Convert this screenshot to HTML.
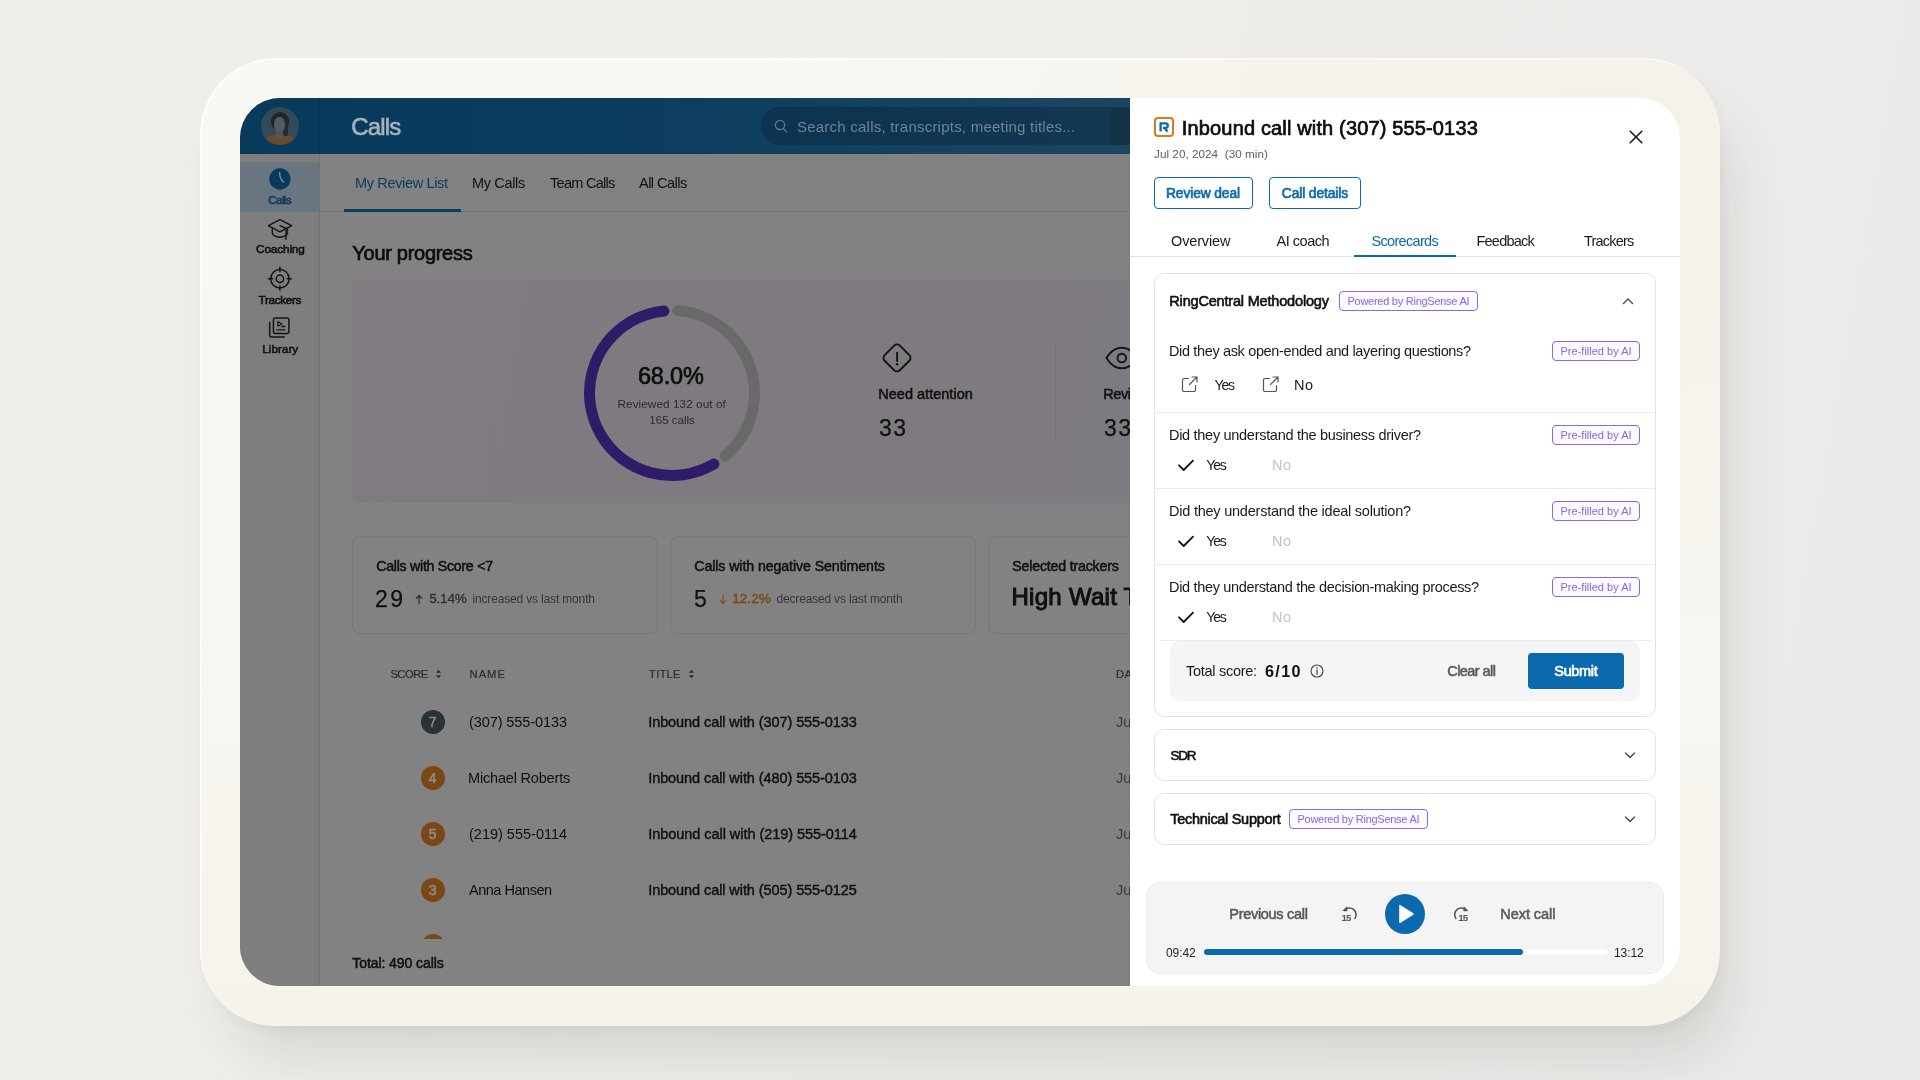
<!DOCTYPE html><html><head><meta charset="utf-8"><title>Calls</title><style>html,body{margin:0;padding:0}body{width:1920px;height:1080px;overflow:hidden;position:relative;font-family:"Liberation Sans", sans-serif;background:linear-gradient(100deg,#efeeeb 0%,#eeedea 50%,#ebeae8 100%)}.a{position:absolute}.t{position:absolute;white-space:nowrap;line-height:1;margin:0}svg{position:absolute;overflow:visible}</style></head><body>
<div class="a" style="left:200px;top:58px;width:1520px;height:968px;background:radial-gradient(ellipse 55% 60% at 92% 8%,#f4f1e8 0%,#f6f3ec 40%,rgba(248,246,241,0) 100%),linear-gradient(180deg,#f9f8f4 0%,#f8f6f1 60%,#f6f3eb 100%);border-radius:76px;box-shadow:20px 45px 55px -12px rgba(60,55,45,.125),4px 8px 14px -4px rgba(60,55,45,.05),inset 1.5px 1.5px 1px rgba(255,255,255,.8);"></div>
<div class="a" style="left:240px;top:98px;width:1440px;height:888px;border-radius:40px;overflow:hidden;will-change:transform">
<div class="a" style="left:-240px;top:-98px;width:1920px;height:1080px">
<div class="a" style="left:240px;top:98px;width:894px;height:888px;background:#828282;"></div>
<div class="a" style="left:240px;top:98px;width:894px;height:56px;background:linear-gradient(90deg,#083a5b 0%,#0a3c5e 40%,#1b4662 100%);"></div>
<div class="a" style="left:240px;top:154px;width:80px;height:832px;background:#7e7e7e;"></div>
<div class="a" style="left:319px;top:98px;width:1px;height:888px;background:rgba(0,0,0,.09);"></div>
<div class="a" style="left:240px;top:162px;width:79px;height:50px;background:#69757f;"></div>
<div class="a" style="left:261px;top:107px;width:38px;height:38px;border-radius:50%;overflow:hidden;background:#34495a"><div class="a" style="left:4px;top:27px;width:30px;height:14px;border-radius:50% 50% 0 0;background:#6a4a2a"></div><div class="a" style="left:10px;top:5px;width:18px;height:18px;border-radius:50% 50% 40% 40%;background:#1f2428"></div><div class="a" style="left:22px;top:11px;width:5px;height:18px;border-radius:3px;background:#262b30"></div><div class="a" style="left:13px;top:10px;width:11px;height:16px;border-radius:45% 45% 50% 50%;background:#555a60"></div><div class="a" style="left:15px;top:24px;width:7px;height:8px;background:#50555b"></div></div>
<div class="t" id="t0" style="top:114.68px;font-size:24px;color:#a7b3bc;-webkit-text-stroke:0.60px;letter-spacing:-0.861px;left:351.30px;">Calls</div>
<div class="a" style="left:761px;top:107px;width:373px;height:38px;background:rgba(6,28,48,.33);border-radius:19px 0 0 19px;"></div>
<svg style="left:773px;top:118px;" width="16" height="16" viewBox="0 0 16 16" fill="none"><circle cx="7" cy="7" r="4.6" stroke="#5c7a90" stroke-width="1.3"/><path d="M10.4 10.6 13.6 13.8" stroke="#5c7a90" stroke-width="1.3" stroke-linecap="round"/></svg>
<div class="t" id="t1" style="top:118.80px;font-size:15px;color:#6c8596;letter-spacing:0.226px;left:797.00px;">Search calls, transcripts, meeting titles...</div>
<div class="a" style="left:1111px;top:107px;width:23px;height:38px;background:rgba(20,30,40,.25);"></div>
<svg style="left:268px;top:167px;" width="24" height="24" viewBox="0 0 24 24" fill="none"><circle cx="11.900" cy="12" r="10.700" fill="#0a3a5b"/><path d="M11.600 5.600c-.100 4.200.800 6.800 4 9.500" stroke="#8493a0" stroke-width="1.300" stroke-linecap="round"/></svg>
<div class="t" id="t2" style="top:194.51px;font-size:11.8px;color:#0a3a5b;-webkit-text-stroke:0.55px;letter-spacing:-0.671px;left:268.17px;">Calls</div>
<svg style="left:268px;top:218px;" width="24" height="23" viewBox="0 0 24 23" fill="none"><path d="M11.900 1.700.400 7.700l11.500 6.100 11.800-6.100Z" stroke="#141414" stroke-width="1.400" stroke-linejoin="round"/><path d="M4.300 10.200v4.800c0 2.300 3.400 4.200 7.600 4.200s7.600-1.900 7.600-4.200v-4.800" stroke="#141414" stroke-width="1.400"/><path d="M11.900 7.700 18 10.500v11" stroke="#141414" stroke-width="1.400" stroke-linecap="round" stroke-linejoin="round"/></svg>
<div class="t" id="t3" style="top:244.31px;font-size:11.8px;color:#101010;-webkit-text-stroke:0.55px;letter-spacing:-0.162px;left:256.12px;">Coaching</div>
<svg style="left:268px;top:267px;" width="24" height="24" viewBox="0 0 24 24" fill="none"><circle cx="11.900" cy="11.800" r="9.200" stroke="#141414" stroke-width="1.500"/><circle cx="11.900" cy="11.800" r="3.700" stroke="#141414" stroke-width="1.500"/><path d="M11.900.300v4.200M11.900 19.100v4.200M.400 11.800h4.200M19.200 11.800h4.200" stroke="#141414" stroke-width="1.500" stroke-linecap="round"/></svg>
<div class="t" id="t4" style="top:294.51px;font-size:11.8px;color:#101010;-webkit-text-stroke:0.55px;letter-spacing:-0.372px;left:258.62px;">Trackers</div>
<svg style="left:268px;top:317px;" width="24" height="22" viewBox="0 0 24 22" fill="none"><rect x="5.400" y="1.100" width="15.500" height="15.500" rx="2" stroke="#141414" stroke-width="1.500"/><path d="M1.700 5.500v13.200a1.200 1.200 0 0 0 1.200 1.200h13.400" stroke="#141414" stroke-width="1.500" stroke-linecap="round"/><path d="M9.800 4.600v4.600l4.100-2.300Z" stroke="#141414" stroke-width="1.100" stroke-linejoin="round"/><path d="M14 9.500h2.700M8.900 12.900h7.800" stroke="#141414" stroke-width="1.400" stroke-linecap="round"/></svg>
<div class="t" id="t5" style="top:344.31px;font-size:11.8px;color:#101010;-webkit-text-stroke:0.55px;letter-spacing:-0.019px;left:262.27px;">Library</div>
<div class="a" style="left:320px;top:211px;width:814px;height:1px;background:#757575;"></div>
<div class="a" style="left:344px;top:209px;width:117px;height:3px;background:#0b3e63;"></div>
<div class="t" id="t6" style="top:175.73px;font-size:14.5px;color:#0b3e63;letter-spacing:-0.344px;left:355.00px;">My Review List</div>
<div class="t" id="t7" style="top:175.73px;font-size:14.5px;color:#101010;letter-spacing:-0.335px;left:472.00px;">My Calls</div>
<div class="t" id="t8" style="top:175.73px;font-size:14.5px;color:#101010;letter-spacing:-0.719px;left:550.00px;">Team Calls</div>
<div class="t" id="t9" style="top:175.73px;font-size:14.5px;color:#101010;letter-spacing:-0.516px;left:639.00px;">All Calls</div>
<div class="t" id="t10" style="top:242.57px;font-size:20px;color:#0c0c0c;-webkit-text-stroke:0.70px;letter-spacing:-0.290px;left:352.35px;">Your progress</div>
<div class="a" style="left:352px;top:280px;width:782px;height:223px;background:linear-gradient(100deg,#807b80 0%,#7f7a7f 50%,#7e7a81 100%);border-radius:6px;"></div>
<svg style="left:572px;top:293px;" width="200" height="200" viewBox="0 0 200 200" fill="none"><circle cx="100" cy="100" r="82.5" stroke="#696969" stroke-width="11" stroke-linecap="round" stroke-dasharray="195.5 1000" transform="rotate(-86 100 100)"/><circle cx="100" cy="100" r="82.5" stroke="#2f1b67" stroke-width="11" stroke-linecap="round" stroke-dasharray="294.5 1000" transform="rotate(59.5 100 100)"/></svg>
<div class="t" id="t11" style="top:364.81px;font-size:23.5px;color:#0c0c0c;-webkit-text-stroke:0.65px;letter-spacing:-0.174px;left:637.98px;">68.0%</div>
<div class="t" id="t12" style="top:398.71px;font-size:11.8px;color:#2b2b2b;letter-spacing:0.040px;left:617.50px;">Reviewed 132 out of</div>
<div class="t" id="t13" style="top:414.61px;font-size:11.8px;color:#2b2b2b;letter-spacing:-0.121px;left:649.35px;">165 calls</div>
<svg style="left:881px;top:343px;" width="32" height="30" viewBox="0 0 32 30" fill="none"><rect x="5.300" y="4.200" width="21.400" height="21.400" rx="4" transform="rotate(45 16 14.900)" stroke="#141414" stroke-width="1.900"/><path d="M16.100 9.800v8.200" stroke="#141414" stroke-width="1.900" stroke-linecap="round"/><circle cx="16.100" cy="21.300" r="1.200" fill="#141414"/></svg>
<div class="t" id="t14" style="top:386.53px;font-size:14.5px;color:#101010;-webkit-text-stroke:0.50px;letter-spacing:0.018px;left:878.25px;">Need attention</div>
<div class="t" id="t15" style="top:417.03px;font-size:23px;color:#101010;-webkit-text-stroke:0.25px;letter-spacing:1.448px;left:879.12px;">33</div>
<div class="a" style="left:1055px;top:342px;width:1px;height:100px;background:#777277;"></div>
<svg style="left:1104px;top:345px;" width="36" height="26" viewBox="0 0 36 26" fill="none"><path d="M2.500 13C7 5.500 12 2.700 17.800 2.700S28.600 5.500 33.100 13C28.600 20.500 23.600 23.300 17.800 23.300S7 20.500 2.500 13Z" stroke="#141414" stroke-width="1.900" stroke-linejoin="round"/><circle cx="17.800" cy="13" r="4.300" stroke="#141414" stroke-width="1.900"/></svg>
<div class="t" id="t16" style="top:386.53px;font-size:14.5px;color:#101010;-webkit-text-stroke:0.50px;letter-spacing:-0.444px;left:1103.25px;">Reviewed</div>
<div class="t" id="t17" style="top:417.03px;font-size:23px;color:#101010;-webkit-text-stroke:0.25px;letter-spacing:1.448px;left:1104.12px;">33</div>
<div class="a" style="left:352px;top:536px;width:306px;height:98px;border-radius:8px;border:1px solid #787878;box-sizing:border-box;"></div>
<div class="a" style="left:670px;top:536px;width:306px;height:98px;border-radius:8px;border:1px solid #787878;box-sizing:border-box;"></div>
<div class="a" style="left:988px;top:536px;width:306px;height:98px;border-radius:8px;border:1px solid #787878;box-sizing:border-box;"></div>
<div class="t" id="t18" style="top:559.08px;font-size:14.2px;color:#101010;-webkit-text-stroke:0.50px;letter-spacing:-0.280px;left:376.25px;">Calls with Score &lt;7</div>
<div class="t" id="t19" style="top:587.83px;font-size:23px;color:#101010;-webkit-text-stroke:0.25px;letter-spacing:2.448px;left:375.12px;">29</div>
<svg style="left:415px;top:594px;" width="8" height="11" viewBox="0 0 8 11" fill="none"><path d="M4 10V1.500M1.200 4.300 4 1.500l2.800 2.800" stroke="#2f2f2f" stroke-width="1.200" stroke-linecap="round" stroke-linejoin="round"/></svg>
<div class="t" id="t20" style="top:592.07px;font-size:13.5px;color:#2f2f2f;-webkit-text-stroke:0.35px;letter-spacing:-0.157px;left:429.18px;">5.14%</div>
<div class="t" id="t21" style="top:593.34px;font-size:12px;color:#363636;letter-spacing:-0.163px;left:472.50px;">increased vs last month</div>
<div class="t" id="t22" style="top:559.08px;font-size:14.2px;color:#101010;-webkit-text-stroke:0.50px;letter-spacing:-0.090px;left:694.25px;">Calls with negative Sentiments</div>
<div class="t" id="t23" style="top:587.83px;font-size:23px;color:#101010;-webkit-text-stroke:0.25px;left:694.12px;">5</div>
<svg style="left:719px;top:594px;" width="8" height="11" viewBox="0 0 8 11" fill="none"><path d="M4 1v8.500M1.200 6.700 4 9.500l2.800-2.800" stroke="#8a4a14" stroke-width="1.200" stroke-linecap="round" stroke-linejoin="round"/></svg>
<div class="t" id="t24" style="top:592.07px;font-size:13.5px;color:#7a4715;-webkit-text-stroke:0.40px;letter-spacing:0.081px;left:732.20px;">12.2%</div>
<div class="t" id="t25" style="top:593.34px;font-size:12px;color:#363636;letter-spacing:-0.177px;left:776.50px;">decreased vs last month</div>
<div class="t" id="t26" style="top:559.08px;font-size:14.2px;color:#101010;-webkit-text-stroke:0.50px;letter-spacing:-0.188px;left:1012.25px;">Selected trackers</div>
<div class="t" id="t27" style="top:585.18px;font-size:24px;color:#101010;-webkit-text-stroke:1.05px;letter-spacing:0.268px;left:1011.52px;">High Wait Time</div>
<div class="t" id="t28" style="top:669.32px;font-size:11.2px;color:#2c2c2c;-webkit-text-stroke:0.20px;letter-spacing:-0.484px;left:390.40px;">SCORE</div>
<svg style="left:435px;top:669px;" width="7" height="10" viewBox="0 0 7 10" fill="none"><path d="M3.500 .8 6 3.800H1Z M3.500 9.200 6 6.200H1Z" fill="#2c2c2c"/></svg>
<div class="t" id="t29" style="top:669.32px;font-size:11.2px;color:#2c2c2c;-webkit-text-stroke:0.20px;letter-spacing:0.978px;left:469.60px;">NAME</div>
<div class="t" id="t30" style="top:669.32px;font-size:11.2px;color:#2c2c2c;-webkit-text-stroke:0.20px;letter-spacing:0.198px;left:649.10px;">TITLE</div>
<svg style="left:688px;top:669px;" width="7" height="10" viewBox="0 0 7 10" fill="none"><path d="M3.500 .8 6 3.800H1Z M3.500 9.200 6 6.200H1Z" fill="#2c2c2c"/></svg>
<div class="t" id="t31" style="top:669.32px;font-size:11.2px;color:#2c2c2c;-webkit-text-stroke:0.20px;letter-spacing:0.415px;left:1116.10px;">DATE</div>
<div class="a" style="left:421px;top:710px;width:24px;height:24px;background:#2b3236;border-radius:12px;"></div>
<div class="t" id="t32" style="top:715.05px;font-size:14px;color:#85898b;-webkit-text-stroke:0.50px;left:428.79px;">7</div>
<div class="t" id="t33" style="top:714.73px;font-size:14.5px;color:#101010;letter-spacing:-0.085px;left:469.00px;">(307) 555-0133</div>
<div class="t" id="t34" style="top:714.73px;font-size:14.5px;color:#101010;-webkit-text-stroke:0.42px;letter-spacing:-0.083px;left:648.21px;">Inbound call with (307) 555-0133</div>
<div class="t" id="t35" style="top:714.73px;font-size:14.5px;color:#3a3a3a;left:1116.00px;">Jul 20, 2024</div>
<div class="a" style="left:352px;top:750px;width:782px;height:1px;background:#7c7c7c;"></div>
<div class="a" style="left:421px;top:766px;width:24px;height:24px;background:#7a4715;border-radius:12px;"></div>
<div class="t" id="t36" style="top:771.05px;font-size:14px;color:#8e8e8e;-webkit-text-stroke:0.50px;left:428.79px;">4</div>
<div class="t" id="t37" style="top:770.73px;font-size:14.5px;color:#101010;letter-spacing:-0.180px;left:468.00px;">Michael Roberts</div>
<div class="t" id="t38" style="top:770.73px;font-size:14.5px;color:#101010;-webkit-text-stroke:0.42px;letter-spacing:-0.083px;left:648.21px;">Inbound call with (480) 555-0103</div>
<div class="t" id="t39" style="top:770.73px;font-size:14.5px;color:#3a3a3a;left:1116.00px;">Jul 20, 2024</div>
<div class="a" style="left:352px;top:806px;width:782px;height:1px;background:#7c7c7c;"></div>
<div class="a" style="left:421px;top:822px;width:24px;height:24px;background:#7a4715;border-radius:12px;"></div>
<div class="t" id="t40" style="top:827.05px;font-size:14px;color:#8e8e8e;-webkit-text-stroke:0.50px;left:428.79px;">5</div>
<div class="t" id="t41" style="top:826.73px;font-size:14.5px;color:#101010;letter-spacing:-0.002px;left:469.00px;">(219) 555-0114</div>
<div class="t" id="t42" style="top:826.73px;font-size:14.5px;color:#101010;-webkit-text-stroke:0.42px;letter-spacing:-0.048px;left:648.21px;">Inbound call with (219) 555-0114</div>
<div class="t" id="t43" style="top:826.73px;font-size:14.5px;color:#3a3a3a;left:1116.00px;">Jul 20, 2024</div>
<div class="a" style="left:352px;top:862px;width:782px;height:1px;background:#7c7c7c;"></div>
<div class="a" style="left:421px;top:878px;width:24px;height:24px;background:#7a4715;border-radius:12px;"></div>
<div class="t" id="t44" style="top:883.05px;font-size:14px;color:#8e8e8e;-webkit-text-stroke:0.50px;left:428.79px;">3</div>
<div class="t" id="t45" style="top:882.73px;font-size:14.5px;color:#101010;letter-spacing:-0.481px;left:469.00px;">Anna Hansen</div>
<div class="t" id="t46" style="top:882.73px;font-size:14.5px;color:#101010;-webkit-text-stroke:0.42px;letter-spacing:-0.083px;left:648.21px;">Inbound call with (505) 555-0125</div>
<div class="t" id="t47" style="top:882.73px;font-size:14.5px;color:#3a3a3a;left:1116.00px;">Jul 20, 2024</div>
<div class="a" style="left:352px;top:918px;width:782px;height:1px;background:#7c7c7c;"></div>
<div class="a" style="left:421px;top:933.500px;width:24px;height:5px;overflow:hidden"><div class="a" style="left:0;top:0;width:24px;height:24px;border-radius:12px;background:#7a4715"></div></div>
<div class="t" id="t48" style="top:956.15px;font-size:14px;color:#101010;-webkit-text-stroke:0.50px;letter-spacing:-0.074px;left:352.25px;">Total: 490 calls</div>
<div class="a" style="left:1130px;top:98px;width:550px;height:888px;background:#ffffff;"></div>
<div class="a" style="left:1154px;top:117px;width:20px;height:20px;background:#fff;border-radius:4px;border:2px solid #d67a1c;box-sizing:border-box;"></div>
<svg style="left:1158px;top:121px;" width="12" height="12" viewBox="0 0 12 12" fill="none"><path d="M2.600 10.600V2.400h5a2.200 2.200 0 0 1 0 4.400H5" stroke="#0a6aad" stroke-width="2.300" stroke-linejoin="miter"/><path d="M6.300 6.800 9.600 10.600" stroke="#0a6aad" stroke-width="2.300"/></svg>
<div class="t" id="t49" style="top:117.87px;font-size:20px;color:#0c0c0c;-webkit-text-stroke:0.70px;letter-spacing:0.149px;left:1181.85px;">Inbound call with (307) 555-0133</div>
<svg style="left:1629px;top:130px;" width="14" height="14" viewBox="0 0 14 14" fill="none"><path d="M1.200 1.200 12.800 12.800M12.800 1.200 1.200 12.800" stroke="#1a1a1a" stroke-width="1.600" stroke-linecap="round"/></svg>
<div class="t" id="t50" style="top:148.10px;font-size:11.7px;color:#5f5f5f;letter-spacing:0.040px;left:1154.00px;">Jul 20, 2024&nbsp; (30 min)</div>
<div class="a" style="left:1154px;top:177px;width:99px;height:32px;background:#fff;border-radius:4px;border:1px solid #0a6aad;box-sizing:border-box;"></div>
<div class="t" id="t51" style="top:186.82px;font-size:13.8px;color:#0a6aad;-webkit-text-stroke:0.65px;letter-spacing:-0.114px;left:1166.03px;">Review deal</div>
<div class="a" style="left:1269px;top:177px;width:92px;height:32px;background:#fff;border-radius:4px;border:1px solid #0a6aad;box-sizing:border-box;"></div>
<div class="t" id="t52" style="top:186.82px;font-size:13.8px;color:#0a6aad;-webkit-text-stroke:0.65px;letter-spacing:-0.112px;left:1281.83px;">Call details</div>
<div class="a" style="left:1130px;top:256px;width:550px;height:1px;background:#e4e4e4;"></div>
<div class="a" style="left:1354px;top:255px;width:102px;height:2px;background:#0a6aad;"></div>
<div class="t" id="t53" style="top:233.73px;font-size:14.5px;color:#1a1a1a;letter-spacing:-0.138px;left:1171.00px;">Overview</div>
<div class="t" id="t54" style="top:233.73px;font-size:14.5px;color:#1a1a1a;letter-spacing:-0.480px;left:1276.50px;">AI coach</div>
<div class="t" id="t55" style="top:233.73px;font-size:14.5px;color:#0a6aad;letter-spacing:-0.677px;left:1371.50px;">Scorecards</div>
<div class="t" id="t56" style="top:233.73px;font-size:14.5px;color:#1a1a1a;letter-spacing:-0.777px;left:1476.50px;">Feedback</div>
<div class="t" id="t57" style="top:233.73px;font-size:14.5px;color:#1a1a1a;letter-spacing:-0.801px;left:1584.00px;">Trackers</div>
<div class="a" style="left:1154px;top:273px;width:502px;height:444px;background:#fff;border-radius:10px;border:1px solid #e2e2e2;box-sizing:border-box;"></div>
<div class="t" id="t58" style="top:293.73px;font-size:14.5px;color:#111;-webkit-text-stroke:0.60px;letter-spacing:-0.181px;left:1169.30px;">RingCentral Methodology</div>
<div class="a" style="left:1339px;top:291px;width:139px;height:20px;background:#fbfaff;border-radius:4px;border:1px solid #8c63f2;box-sizing:border-box;"></div>
<div class="t" id="t59" style="top:295.89px;font-size:11px;color:#8c63f2;letter-spacing:-0.262px;left:1347.50px;">Powered by RingSense AI</div>
<svg style="left:1621px;top:295px;" width="14" height="12" viewBox="0 0 14 12" fill="none"><path d="M2.500 8.500 7 4l4.500 4.500" stroke="#444" stroke-width="1.300" stroke-linecap="round" stroke-linejoin="round"/></svg>
<div class="t" id="t60" style="top:343.73px;font-size:14.5px;color:#1a1a1a;letter-spacing:-0.356px;left:1169.00px;">Did they ask open-ended and layering questions?</div>
<div class="a" style="left:1552px;top:341px;width:88px;height:20px;background:#fbfaff;border-radius:4px;border:1px solid #8c63f2;box-sizing:border-box;"></div>
<div class="t" id="t61" style="top:345.89px;font-size:11px;color:#8c63f2;letter-spacing:0.009px;left:1560.50px;">Pre-filled by AI</div>
<svg style="left:1181px;top:376px;" width="17" height="17" viewBox="0 0 17 17" fill="none"><path d="M7.500 2.500H3A1.500 1.500 0 0 0 1.500 4v10A1.500 1.500 0 0 0 3 15.500h10a1.500 1.500 0 0 0 1.500-1.500V9.500" stroke="#555" stroke-width="1.200" stroke-linecap="round"/><path d="M8.500 8.500 16 1M11 1h5v5" stroke="#555" stroke-width="1.200" stroke-linecap="round" stroke-linejoin="round"/></svg>
<div class="t" id="t62" style="top:378.15px;font-size:14px;color:#1a1a1a;letter-spacing:-1.172px;left:1214.50px;">Yes</div>
<svg style="left:1262px;top:376px;" width="17" height="17" viewBox="0 0 17 17" fill="none"><path d="M7.500 2.500H3A1.500 1.500 0 0 0 1.500 4v10A1.500 1.500 0 0 0 3 15.500h10a1.500 1.500 0 0 0 1.500-1.500V9.500" stroke="#555" stroke-width="1.200" stroke-linecap="round"/><path d="M8.500 8.500 16 1M11 1h5v5" stroke="#555" stroke-width="1.200" stroke-linecap="round" stroke-linejoin="round"/></svg>
<div class="t" id="t63" style="top:377.73px;font-size:14.5px;color:#1a1a1a;letter-spacing:0.517px;left:1294.00px;">No</div>
<div class="a" style="left:1155px;top:412px;width:500px;height:1px;background:#ececec;"></div>
<div class="t" id="t64" style="top:427.73px;font-size:14.5px;color:#1a1a1a;letter-spacing:-0.295px;left:1169.00px;">Did they understand the business driver?</div>
<div class="a" style="left:1552px;top:425px;width:88px;height:20px;background:#fbfaff;border-radius:4px;border:1px solid #8c63f2;box-sizing:border-box;"></div>
<div class="t" id="t65" style="top:429.89px;font-size:11px;color:#8c63f2;letter-spacing:0.009px;left:1560.50px;">Pre-filled by AI</div>
<svg style="left:1177px;top:457px;" width="18" height="16" viewBox="0 0 18 16" fill="none"><path d="M2 8.300l4.700 4.700L16 3.700" stroke="#111" stroke-width="1.800" stroke-linecap="round" stroke-linejoin="round"/></svg>
<div class="t" id="t66" style="top:458.15px;font-size:14px;color:#1a1a1a;letter-spacing:-1.172px;left:1206.30px;">Yes</div>
<div class="t" id="t67" style="top:457.73px;font-size:14.5px;color:#c2c2c2;letter-spacing:0.517px;left:1272.00px;">No</div>
<div class="a" style="left:1155px;top:488px;width:500px;height:1px;background:#ececec;"></div>
<div class="t" id="t68" style="top:503.73px;font-size:14.5px;color:#1a1a1a;letter-spacing:-0.227px;left:1169.00px;">Did they understand the ideal solution?</div>
<div class="a" style="left:1552px;top:501px;width:88px;height:20px;background:#fbfaff;border-radius:4px;border:1px solid #8c63f2;box-sizing:border-box;"></div>
<div class="t" id="t69" style="top:505.89px;font-size:11px;color:#8c63f2;letter-spacing:0.009px;left:1560.50px;">Pre-filled by AI</div>
<svg style="left:1177px;top:533px;" width="18" height="16" viewBox="0 0 18 16" fill="none"><path d="M2 8.300l4.700 4.700L16 3.700" stroke="#111" stroke-width="1.800" stroke-linecap="round" stroke-linejoin="round"/></svg>
<div class="t" id="t70" style="top:534.15px;font-size:14px;color:#1a1a1a;letter-spacing:-1.172px;left:1206.30px;">Yes</div>
<div class="t" id="t71" style="top:533.73px;font-size:14.5px;color:#c2c2c2;letter-spacing:0.517px;left:1272.00px;">No</div>
<div class="a" style="left:1155px;top:564px;width:500px;height:1px;background:#ececec;"></div>
<div class="t" id="t72" style="top:579.73px;font-size:14.5px;color:#1a1a1a;letter-spacing:-0.331px;left:1169.00px;">Did they understand the decision-making process?</div>
<div class="a" style="left:1552px;top:577px;width:88px;height:20px;background:#fbfaff;border-radius:4px;border:1px solid #8c63f2;box-sizing:border-box;"></div>
<div class="t" id="t73" style="top:581.89px;font-size:11px;color:#8c63f2;letter-spacing:0.009px;left:1560.50px;">Pre-filled by AI</div>
<svg style="left:1177px;top:609px;" width="18" height="16" viewBox="0 0 18 16" fill="none"><path d="M2 8.300l4.700 4.700L16 3.700" stroke="#111" stroke-width="1.800" stroke-linecap="round" stroke-linejoin="round"/></svg>
<div class="t" id="t74" style="top:610.15px;font-size:14px;color:#1a1a1a;letter-spacing:-1.172px;left:1206.30px;">Yes</div>
<div class="t" id="t75" style="top:609.73px;font-size:14.5px;color:#c2c2c2;letter-spacing:0.517px;left:1272.00px;">No</div>
<div class="a" style="left:1159px;top:640px;width:492px;height:1px;background:#ececec;"></div>
<div class="a" style="left:1170px;top:641px;width:470px;height:60px;background:#f5f5f5;border-radius:10px;"></div>
<div class="t" id="t76" style="top:663.73px;font-size:14.5px;color:#1a1a1a;letter-spacing:-0.284px;left:1186.00px;">Total score:</div>
<div class="t" id="t77" style="top:663.09px;font-size:16.2px;color:#111;font-weight:700;letter-spacing:1.329px;left:1265.00px;">6/10</div>
<svg style="left:1310px;top:664px;" width="14" height="14" viewBox="0 0 14 14" fill="none"><circle cx="7" cy="7" r="6" stroke="#444" stroke-width="1.100"/><path d="M7 6.200v4" stroke="#444" stroke-width="1.200" stroke-linecap="round"/><circle cx="7" cy="4" r=".8" fill="#444"/></svg>
<div class="t" id="t78" style="top:663.73px;font-size:14.5px;color:#5a5a5a;-webkit-text-stroke:0.55px;letter-spacing:-0.565px;left:1447.28px;">Clear all</div>
<div class="a" style="left:1528px;top:653px;width:96px;height:36px;background:#0a6aad;border-radius:4px;"></div>
<div class="t" id="t79" style="top:663.73px;font-size:14.5px;color:#fff;-webkit-text-stroke:0.65px;letter-spacing:-0.352px;left:1554.33px;">Submit</div>
<div class="a" style="left:1154px;top:729px;width:502px;height:52px;background:#fff;border-radius:10px;border:1px solid #e2e2e2;box-sizing:border-box;"></div>
<div class="t" id="t80" style="top:748.87px;font-size:13.5px;color:#111;-webkit-text-stroke:0.60px;letter-spacing:-1.333px;left:1170.60px;">SDR</div>
<svg style="left:1623px;top:749px;" width="14" height="12" viewBox="0 0 14 12" fill="none"><path d="M2.500 4 7 8.500 11.500 4" stroke="#444" stroke-width="1.300" stroke-linecap="round" stroke-linejoin="round"/></svg>
<div class="a" style="left:1154px;top:793px;width:502px;height:52px;background:#fff;border-radius:10px;border:1px solid #e2e2e2;box-sizing:border-box;"></div>
<div class="t" id="t81" style="top:811.73px;font-size:14.5px;color:#111;-webkit-text-stroke:0.60px;letter-spacing:-0.302px;left:1170.30px;">Technical Support</div>
<div class="a" style="left:1289px;top:809px;width:139px;height:20px;background:#fbfaff;border-radius:4px;border:1px solid #8c63f2;box-sizing:border-box;"></div>
<div class="t" id="t82" style="top:813.89px;font-size:11px;color:#8c63f2;letter-spacing:-0.262px;left:1297.50px;">Powered by RingSense AI</div>
<svg style="left:1623px;top:813px;" width="14" height="12" viewBox="0 0 14 12" fill="none"><path d="M2.500 4 7 8.500 11.500 4" stroke="#444" stroke-width="1.300" stroke-linecap="round" stroke-linejoin="round"/></svg>
<div class="a" style="left:1146px;top:882px;width:518px;height:92px;background:#f4f4f4;border-radius:14px;border:1px solid #ebebeb;box-sizing:border-box;"></div>
<div class="t" id="t83" style="top:906.73px;font-size:14.5px;color:#5a5a5a;-webkit-text-stroke:0.55px;letter-spacing:-0.294px;left:1229.28px;">Previous call</div>
<div class="t" id="t84" style="top:906.73px;font-size:14.5px;color:#5a5a5a;-webkit-text-stroke:0.55px;letter-spacing:-0.055px;left:1500.28px;">Next call</div>
<div class="a" style="left:1385px;top:894px;width:40px;height:40px;border-radius:50%;background:#0a6aad"></div>
<svg style="left:1385px;top:894px;" width="40" height="40" viewBox="0 0 40 40" fill="none"><path d="M14.200 12v16a1 1 0 0 0 1.500.850l12.600-8a1 1 0 0 0 0-1.700l-12.600-8a1 1 0 0 0-1.500.850Z" fill="#fff"/></svg>
<svg style="left:1340px;top:904px;" width="20" height="20" viewBox="0 0 20 20" fill="none"><path d="M4.440 6.360A6.600 6.600 0 0 1 14.900 14.390" stroke="#555" stroke-width="1.600" stroke-linecap="round"/><path d="M2.300 7 7 2.200l.400 5Z" fill="#555"/></svg>
<div class="t" id="t85" style="top:912.59px;font-size:9.7px;color:#555;font-weight:700;letter-spacing:-0.794px;left:1341.50px;">15</div>
<svg style="left:1451px;top:904px;" width="20" height="20" viewBox="0 0 20 20" fill="none"><path d="M4.840 14.390A6.600 6.600 0 0 1 15.300 6.360" stroke="#555" stroke-width="1.600" stroke-linecap="round"/><path d="M17.450 7 12.750 2.200l-.400 5Z" fill="#555"/></svg>
<div class="t" id="t86" style="top:912.59px;font-size:9.7px;color:#555;font-weight:700;letter-spacing:-0.794px;left:1458.20px;">15</div>
<div class="t" id="t87" style="top:946.54px;font-size:12px;color:#222;letter-spacing:-0.089px;left:1166.00px;">09:42</div>
<div class="t" id="t88" style="top:946.54px;font-size:12px;color:#222;letter-spacing:-0.089px;left:1614.00px;">13:12</div>
<div class="a" style="left:1204px;top:949px;width:403px;height:6px;background:#fff;border-radius:3px;"></div>
<div class="a" style="left:1204px;top:949px;width:319px;height:6px;background:#0a6aad;border-radius:3px;"></div>
</div></div>
</body></html>
